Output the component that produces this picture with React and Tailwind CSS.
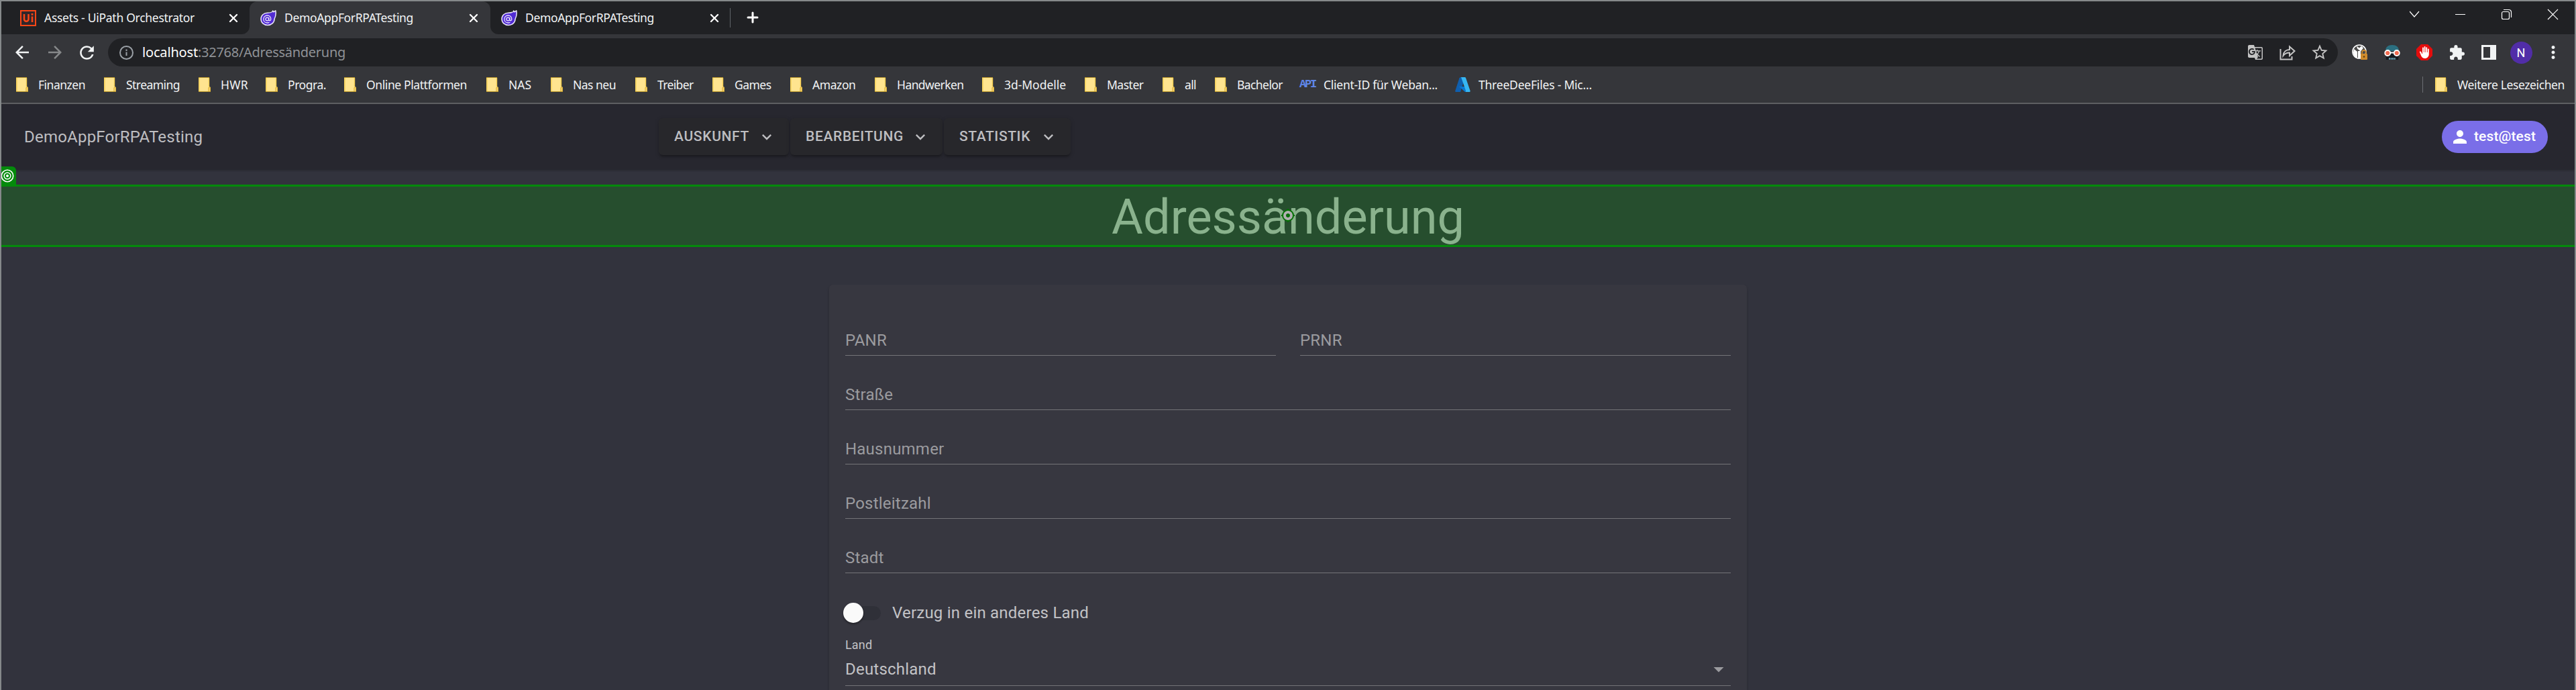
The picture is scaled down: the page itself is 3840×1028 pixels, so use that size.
import { useLayoutEffect, useRef } from "react";
import { Plus, X } from "lucide-react";
import { MdPerson, MdExtension, MdStarBorder, MdMoreVert, MdArrowBack, MdArrowForward, MdRefresh, MdGTranslate, MdExpandMore, MdBackHand, MdArrowDropDown } from "react-icons/md";

/* Single-line label whose letter spacing is adjusted to fill the given width. */
function Label({ width, className, children }) {
  const ref = useRef(null);
  useLayoutEffect(() => {
    const el = ref.current;
    el.style.letterSpacing = "0px";
    const natural = el.getBoundingClientRect().width;
    el.style.letterSpacing = `${(width - natural) / el.textContent.length}px`;
  }, [width, children]);
  return <span ref={ref} className={"inline-block shrink-0 whitespace-nowrap " + (className || "")}>{children}</span>;
}

const Folder = () => (
  <svg className="h-[22px] w-[18px] shrink-0" viewBox="0 0 18 22">
    <path d="M0 0h16v14l2 1v7H0z" fill="#ffe48f" />
    <path d="M0 .5h16M0 21.5h18" stroke="#b8962e" />
    <path d="M1 1v20M15.5 1v13" stroke="#f7cf52" strokeWidth="1.4" />
    <path d="M17.3 15v6M15 21v-5l1.5-1.5" stroke="#dcae30" strokeWidth="1.2" fill="none" />
  </svg>
);

const UiLogo = () => (
  <svg className="h-6 w-6" viewBox="0 0 24 24" fill="none" stroke="#fa4616">
    <rect x="1" y="1" width="22" height="22" strokeWidth="2" fill="#32262a" />
    <path d="M6 6v7.500a3.200 3.200 0 0 0 6.500 0V6M18 9.500V18" strokeWidth="2.500" />
    <path d="M18 5v2.700" strokeWidth="2.700" />
  </svg>
);

const Blazor = () => (
  <svg className="h-6 w-6" viewBox="0 0 24 24">
    <path d="M18.2 2.5 18.600 1l1.300 1.800L22.800.9c1 6-.2 9.700-1.800 12.600 0 5-4.500 9-10 9C5.200 22.500 1 18.700 1 13.300 1 8 5.300 4.200 10.500 4.200c3.300 0 5.500-.2 7.700-1.700z" fill="#512bd4" stroke="#e9e4fa" strokeWidth="1.500" strokeLinejoin="round" />
    <circle cx="10.300" cy="13.500" r="2.400" fill="none" stroke="#e9e4fa" strokeWidth="1.300" />
    <path d="M12.800 11v3.500c0 2 3 1.600 3-1 0-3.200-2.400-5.500-5.500-5.500s-5.500 2.400-5.500 5.500 2.300 5.500 5.500 5.500c1.200 0 2.200-.2 3.100-.8" fill="none" stroke="#e9e4fa" strokeWidth="1.300" />
  </svg>
);

const Azure = () => (
  <svg className="h-[22px] w-[23px]" viewBox="0 0 23 22">
    <path d="M8 0h7L8 22H1.500C.5 22 0 21.200.300 20.200L6.500 1.200z" fill="#0f5fae" />
    <path d="M6 14h11l2 7-4 1z" fill="#0a78d1" />
    <path d="M9 0h5.500c.8 0 1.300.4 1.600 1.200l6.500 19c.3 1-.3 1.800-1.200 1.800H15c.8 0 1.400-.8 1.100-1.800z" fill="#36b6f2" />
  </svg>
);

const bookmarks = [
  ["Finanzen", 131, 70], ["Streaming", 141, 80], ["HWR", 100, 41], ["Progra.", 117, 57],
  ["Online Plattformen", 212, 150], ["NAS", 96, 34], ["Nas neu", 126, 64], ["Treiber", 115, 53.5],
  ["Games", 116, 54.5], ["Amazon", 126, 64.5], ["Handwerken", 160, 99.5], ["3d-Modelle", 153, 92],
  ["Master", 116, 54.5], ["all", 78, 17], ["Bachelor", 126, 68],
];

function Tab({ icon, title, width, textWidth, active }) {
  return (
    <div className={active ? "relative flex h-[49px] items-center rounded-t-[12px] bg-[#35363a] pl-4" : "flex h-[49px] items-center pl-4"} style={{ width }}>
      {active && (
        <>
          <svg className="absolute -left-3 bottom-0 h-3 w-3" viewBox="0 0 12 12"><path d="M12 0v12H0A12 12 0 0 0 12 0z" fill="#35363a" /></svg>
          <svg className="absolute -right-3 bottom-0 h-3 w-3" viewBox="0 0 12 12"><path d="M0 0v12h12A12 12 0 0 1 0 0z" fill="#35363a" /></svg>
        </>
      )}
      {icon}
      <div className="ml-3 flex w-[272px] pb-[2px]">
        <Label width={textWidth} className="text-[17.5px] leading-6 text-[#f1f3f4]">{title}</Label>
      </div>
      <X className="h-5 w-5 text-white" strokeWidth={2.8} />
    </div>
  );
}

function TabStrip() {
  return (
    <div className="flex h-[49px] bg-[#202124]">
      <div className="w-3 shrink-0" />
      <Tab icon={<UiLogo />} title="Assets - UiPath Orchestrator" width={358} textWidth={224} />
      <Tab icon={<Blazor />} title="DemoAppForRPATesting" width={359} textWidth={192} active />
      <Tab icon={<Blazor />} title="DemoAppForRPATesting" width={357} textWidth={192} />
      <div className="mt-[10px] h-[29px] w-px bg-[#5f6368]" />
      <Plus className="ml-[21px] mt-3 h-6 w-6 text-white" strokeWidth={3} />
      <div className="ml-auto flex h-[38px] items-center pr-[24px] text-white">
        <svg className="h-5 w-[222px]" viewBox="0 0 222 20" fill="none" stroke="currentColor" strokeWidth="1.2">
          <path d="M0 6l7 8 7-8M68 10.500h15" />
          <rect x="137.500" y="6.500" width="11" height="11" rx="2" />
          <path d="M140 3.500h8a3.500 3.500 0 0 1 3.500 3.500v8M206 3l15 15M221 3l-15 15" />
        </svg>
      </div>
    </div>
  );
}

function Toolbar() {
  return (
    <div className="flex h-[54px] items-center pl-[17px] text-[#f1f3f4]">
      <MdArrowBack className="h-[30px] w-[30px] -mx-px" />
      <MdArrowForward className="ml-5 h-[30px] w-[30px] -mr-[2px] text-[#86888a]" />
      <MdRefresh className="ml-[19px] h-[31px] w-[31px] -mr-px" />
      <div className="ml-[17px] flex h-[42px] w-[3324px] items-center rounded-full bg-[#202124] pl-[17px] pr-[13px]">
        <svg className="h-[21px] w-[21px] text-[#9aa0a6]" viewBox="0 0 21 21" fill="none" stroke="currentColor" strokeWidth="2">
          <circle cx="10.5" cy="10.5" r="9.5" /><path d="M10.5 9.5V15M10.5 5.5V8" />
        </svg>
        <Label width={83} className="ml-[13px] text-[20px] text-white">localhost</Label>
        <Label width={220} className="text-[20px] text-[#8f9296]">:32768/Adressänderung</Label>
        <div className="ml-auto flex items-center gap-5 text-[#c4c4c4]">
          <MdGTranslate className="h-6 w-7" />
          <svg className="h-7 w-7" viewBox="0 0 28 28" fill="none" stroke="currentColor" strokeWidth="2">
            <path d="M3.5 9v15.500h17V20" /><path d="M7.500 19c.5-6 4.500-9 9.500-9V5.500l7.500 6.500-7.500 7v-4.500c-4 0-7 1-9.500 4.500z" />
          </svg>
          <MdStarBorder className="h-7 w-7" />
        </div>
      </div>
      <div className="ml-[9px] flex items-center">
        <div className="flex w-12 justify-center">
          <svg className="h-6 w-6" viewBox="0 0 24 24">
            <circle cx="11" cy="11" r="10" fill="#4a4a4a" stroke="#fff" strokeWidth="1.6" />
            <path d="M3 7l5 4v9C5 19 2 16 2 12zM7 2.500l4 3 3-3 3 3-4 5-5-4zM9 10h4v11H9z" fill="#fff" />
            <rect x="13" y="14" width="10" height="9" rx="1" fill="#cf8b2c" />
            <path d="M15 14v-2a3 3 0 0 1 6 0v2" fill="none" stroke="#cf8b2c" strokeWidth="1.8" />
            <circle cx="18" cy="18.500" r="1.200" fill="#5a3c12" />
          </svg>
        </div>
        <div className="flex w-12 justify-center">
          <svg className="h-6 w-6" viewBox="0 0 24 24">
            <path d="M2 10C2 4 6 1 12 1s10 3 10 9z" fill="#2b6f80" />
            <path d="M2 11h20l-1 12H3z" fill="#151a20" />
            <path d="M7 21.500h10.500" stroke="#79b8cc" strokeWidth="2.5" strokeDasharray="1.800 .8" />
            <path d="M9 12.500h6" stroke="#fff" strokeWidth="2" />
            <circle cx="5.200" cy="13" r="4" fill="#f26b50" stroke="#fff" strokeWidth="1.8" />
            <circle cx="18.800" cy="13" r="4" fill="#f26b50" stroke="#fff" strokeWidth="1.8" />
          </svg>
        </div>
        <div className="flex w-12 justify-center">
          <div className="relative h-6 w-6">
            <svg className="h-6 w-6" viewBox="0 0 24 24"><path d="M7 0h10l7 7v10l-7 7H7l-7-7V7z" fill="#e40d0d" /></svg>
            <MdBackHand className="absolute left-[3px] top-[3px] h-[18px] w-[18px] text-white" />
          </div>
        </div>
        <div className="flex w-12 justify-center"><MdExtension className="h-[25px] w-[25px]" /></div>
        <div className="flex w-12 justify-center">
          <div className="flex h-[22px] w-[22px] border-[3px] border-[#f1f3f4]"><div className="ml-auto w-[6px] bg-[#f1f3f4]" /></div>
        </div>
        <div className="flex w-12 justify-center">
          <div className="flex h-[33px] w-[33px] items-center justify-center rounded-full bg-[#512da8] font-['Roboto'] text-[18px] text-white">N</div>
        </div>
        <div className="flex w-12 justify-center"><MdMoreVert className="h-[30px] w-[30px]" /></div>
      </div>
    </div>
  );
}

function BookmarkBar() {
  return (
    <div className="flex h-[48px] items-center pb-[6px] pl-[22px] pr-[15px] text-[17.5px] leading-6 text-[#f1f3f4]">
      {bookmarks.map(([name, pitch, w]) => (
        <div key={name} className="flex shrink-0 items-center gap-[15px]" style={{ width: pitch }}>
          <Folder />
          <Label width={w}>{name}</Label>
        </div>
      ))}
      <div className="flex w-[232px] shrink-0 items-center">
        <Label width={24} className="font-['Liberation_Mono'] text-[17px] font-bold text-[#5f86e8]">API</Label>
        <Label width={170} className="ml-[12px]">Client-ID für Weban...</Label>
      </div>
      <Azure />
      <Label width={169} className="ml-[12px]">ThreeDeeFiles - Mic...</Label>
      <div className="ml-auto flex items-center">
        <div className="h-6 w-px bg-[#6b6e73]" />
        <div className="ml-[18px] mr-[15px] flex"><Folder /></div>
        <Label width={160}>Weitere Lesezeichen</Label>
      </div>
    </div>
  );
}

function MenuButton({ children, width, textWidth }) {
  return (
    <div className="flex h-[55px] items-center rounded-[6px] bg-[#27272b] pl-[23px] pr-[19px] text-[21px] font-medium shadow-[0_4px_3px_-2px_rgba(0,0,0,0.25),0_2px_6px_rgba(0,0,0,0.18)]" style={{ width }}>
      <Label width={textWidth}>{children}</Label>
      <MdExpandMore className="ml-auto h-7 w-7" />
    </div>
  );
}

function AppBar() {
  return (
    <div className="flex h-[97px] items-center bg-[#27272f] pl-[34px] pr-[40px] text-[#bebec1] shadow-[0_2px_3px_rgba(0,0,0,0.25)]">
      <div className="w-[946px] text-[24px] tracking-[0.22px]">DemoAppForRPATesting</div>
      <div className="flex gap-[2px]">
        <MenuButton width={194} textWidth={112}>AUSKUNFT</MenuButton>
        <MenuButton width={227} textWidth={146}>BEARBEITUNG</MenuButton>
        <MenuButton width={189} textWidth={106}>STATISTIK</MenuButton>
      </div>
      <div className="ml-auto flex h-12 w-[158px] items-center rounded-full bg-[#7a6ee8] pl-[12px] text-[21px] font-medium text-white">
        <MdPerson className="mr-[6px] h-[30px] w-[30px]" />
        <Label width={92}>test@test</Label>
      </div>
    </div>
  );
}

function Field({ label, className }) {
  return (
    <div className={"flex h-[81px] items-end border-b border-[#747478] pb-[6px] text-[24px] leading-8 tracking-[0.22px] text-[#9b9b9f] " + (className || "")}>{label}</div>
  );
}

function Form() {
  return (
    <div className="mx-auto mt-[56px] h-[604px] w-[1368px] rounded-t-[6px] bg-[#373740] px-6 pt-[25px] shadow-[0_3px_4px_rgba(0,0,0,0.2)]">
      <div className="flex gap-9">
        <Field label="PANR" className="flex-1" />
        <Field label="PRNR" className="flex-1" />
      </div>
      <Field label="Straße" />
      <Field label="Hausnummer" />
      <Field label="Postleitzahl" />
      <Field label="Stadt" />
      <div className="mt-[40px] flex h-[38px] items-center text-[24px] tracking-[0.22px] text-[#c3c3c6]">
        <div className="mr-[17px] flex h-[21px] w-[53px] items-center rounded-full bg-[#2f3038]">
          <div className="-ml-[3px] h-[30px] w-[30px] rounded-full bg-[#fafafa] shadow-[0_2px_3px_rgba(0,0,0,0.4)]" />
        </div>
        Verzug in ein anderes Land
      </div>
      <div className="mt-[17px] text-[18px] leading-[24px] tracking-[0.17px] text-[#c3c3c6]">Land</div>
      <div className="flex h-[49px] items-center border-b border-[#747478] text-[24px] tracking-[0.22px] text-[#c3c3c6]">
        Deutschland
        <MdArrowDropDown className="ml-auto h-9 w-9 text-[#9b9b9f]" />
      </div>
    </div>
  );
}

export default function App() {
  return (
    <div className="h-[1028px] w-[3840px] overflow-hidden border-x-2 border-t-2 border-[#85898a] bg-[#32333d] font-['Noto_Sans',sans-serif]">
      <div className="h-[153px] border-b-2 border-[#5f6063] bg-[#35363a]">
        <TabStrip />
        <Toolbar />
        <BookmarkBar />
      </div>
      <div className="font-['Roboto',sans-serif]">
        <AppBar />
        <div className="relative -mx-[2px] mt-[23px] flex h-[93px] items-center justify-center border-x border-y-[3px] border-[#048a0b] bg-[#264e2e]">
          <h1 className="pt-[4px] text-[72px] leading-[80px] text-[#8ab28d]">Adressänderung</h1>
          <div className="absolute -left-px -top-[30px] flex h-[28px] w-6 items-center rounded-tr-[6px] bg-[#048a0b] pl-px">
            <svg className="h-5 w-5" viewBox="0 0 20 20" fill="none" stroke="#fff" strokeWidth="1.6">
              <circle cx="10" cy="10" r="8.7" /><circle cx="10" cy="10" r="4.8" /><circle cx="10" cy="10" r="1.2" fill="#fff" />
            </svg>
          </div>
          <svg className="absolute left-[1909px] top-[33px] h-5 w-5" viewBox="0 0 20 20" fill="none">
            <circle cx="10" cy="10" r="5" stroke="#b0b0b0" strokeWidth="4.500" />
            <circle cx="10" cy="10" r="8" stroke="#067006" strokeWidth="2" />
            <circle cx="10" cy="10" r="2.8" fill="#067006" />
            <path d="M10 0v3M10 17v3M0 10h3M17 10h3" stroke="#067006" strokeWidth="2" />
          </svg>
        </div>
        <Form />
      </div>
    </div>
  );
}
